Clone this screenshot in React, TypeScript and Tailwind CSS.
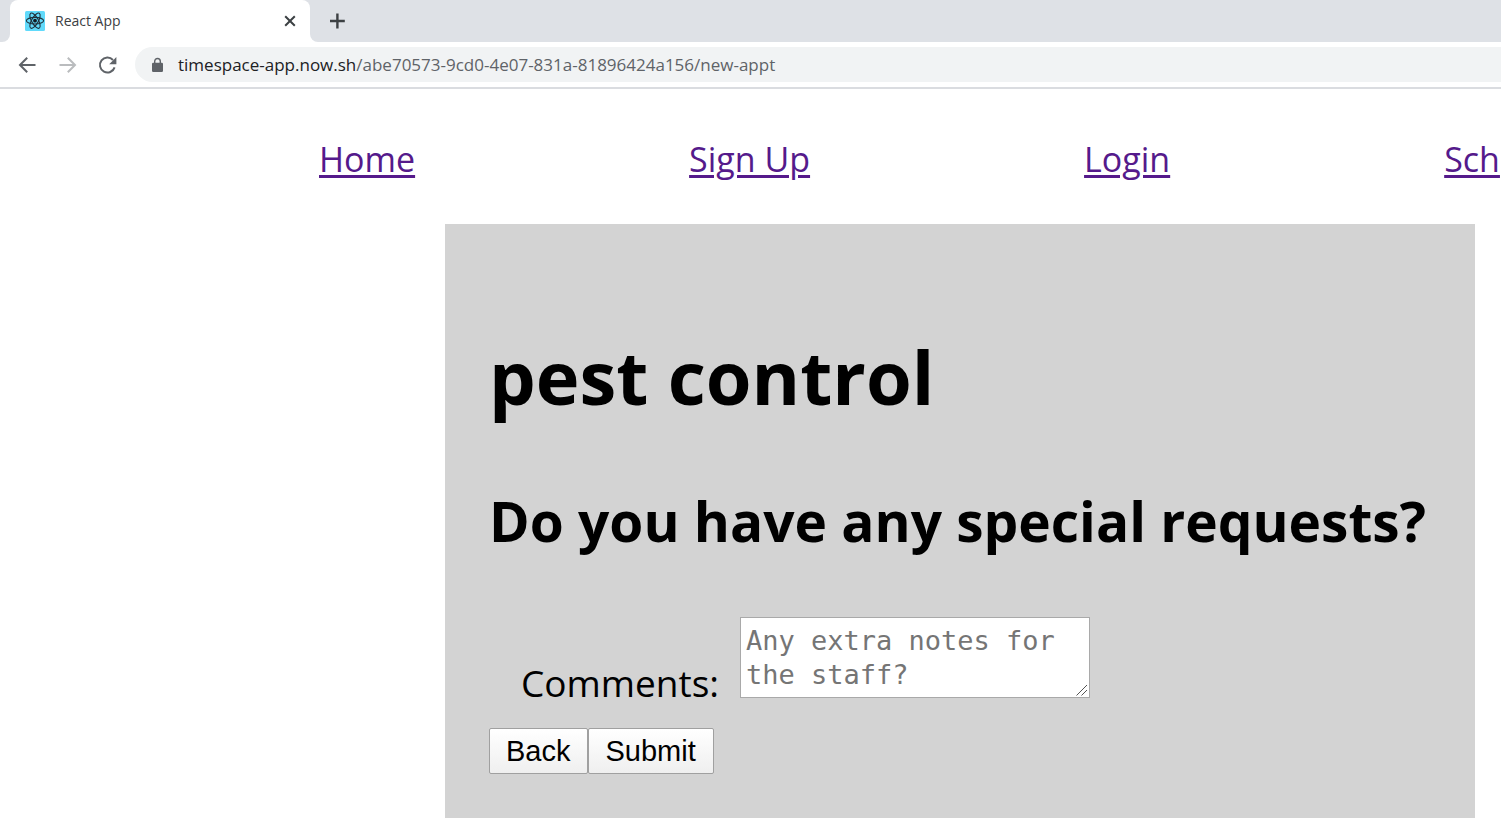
import React from "react";

const UI_FONT = "font-['Open_Sans','Noto_Sans',sans-serif]";

function ReactIcon() {
  return (
    <svg viewBox="0 0 20 20" className="size-5 shrink-0" aria-hidden="true">
      <rect width="20" height="20" rx="1.5" fill="#61dafb" />
      <g fill="none" stroke="#20303a" strokeWidth="1.1">
        <ellipse cx="10" cy="9.7" rx="8.6" ry="3.3" />
        <ellipse cx="10" cy="9.7" rx="8.6" ry="3.3" transform="rotate(60 10 9.7)" />
        <ellipse cx="10" cy="9.7" rx="8.6" ry="3.3" transform="rotate(120 10 9.7)" />
      </g>
      <circle cx="10" cy="9.7" r="1.9" fill="#101820" />
    </svg>
  );
}

function TabStrip() {
  return (
    <div className="flex h-[42px] bg-[#dee1e6]">
      <div className="w-[10px] bg-white">
        <div className="h-full rounded-br-lg bg-[#dee1e6]" />
      </div>
      <div className="flex w-[300px] items-center rounded-t-lg bg-white pl-[15px] pr-[13px]">
        <ReactIcon />
        <span className="ml-[10px] flex-1 text-[14px] leading-5 text-[#3c4043]">React App</span>
        <button type="button" aria-label="Close tab" className="flex size-[14px] items-center justify-center">
          <svg viewBox="0 0 14 14" className="size-[14px]" fill="none" stroke="#3c4043" strokeWidth="2">
            <path d="M2.2 2.2 11.8 11.8M11.8 2.2 2.2 11.8" />
          </svg>
        </button>
      </div>
      <div className="flex flex-1 bg-white">
        <div className="flex flex-1 items-center rounded-bl-lg bg-[#dee1e6] pl-[19px]">
          <button type="button" aria-label="New tab" className="size-4">
            <svg viewBox="0 0 16 16" className="size-4" fill="none" stroke="#3c4043" strokeWidth="2.4">
              <path d="M8.4 .6V15.4M1 8H15.8" />
            </svg>
          </button>
        </div>
      </div>
    </div>
  );
}

function Toolbar() {
  return (
    <div className="flex h-[47px] items-center border-b-2 border-[#dadce0] pl-[17px]">
      <button type="button" aria-label="Back" className="size-5">
        <svg viewBox="0 0 20 20" className="size-5" fill="none" stroke="#5f6368" strokeWidth="2">
          <path d="M18.5 10H3.4M10.2 2.8 3 10l7.2 7.2" />
        </svg>
      </button>
      <button type="button" aria-label="Forward" className="ml-5 size-5">
        <svg viewBox="0 0 20 20" className="size-5" fill="none" stroke="#babcbe" strokeWidth="2">
          <path d="M2.5 10H17.6M10.8 2.8 18 10l-7.2 7.2" />
        </svg>
      </button>
      <button type="button" aria-label="Reload" className="ml-5 size-5">
        <svg viewBox="0 0 20 20" className="size-5" fill="none" stroke="#5f6368" strokeWidth="2">
          <path d="M17.6 12.4A7.5 7.5 0 1 1 16 5" />
          <path d="M19.4 2v7.2h-7.2z" fill="#5f6368" stroke="none" />
        </svg>
      </button>
      <div className="ml-[18px] flex h-[35px] flex-1 items-center rounded-l-full bg-[#f1f3f4] pl-4">
        <svg viewBox="0 0 12 16" className="h-4 w-3 shrink-0" aria-hidden="true">
          <rect x="1" y="5.8" width="11" height="9.2" rx="1.2" fill="#5f6368" />
          <path d="M3.7 6V4.3a2.8 2.8 0 0 1 5.6 0V6" fill="none" stroke="#5f6368" strokeWidth="1.4" />
        </svg>
        <span className="ml-[15px] whitespace-nowrap text-[17px] leading-6 text-[#5f6368]">
          <span className="text-[#202124]">timespace-app.now.sh</span>
          /abe70573-9cd0-4e07-831a-81896424a156/new-appt
        </span>
      </div>
    </div>
  );
}

function Navigation() {
  return (
    <nav className="flex gap-[274px] overflow-hidden whitespace-nowrap pt-[46px] pl-[319px] text-[34px] leading-[48px] text-[#551a8b]">
      {["Home", "Sign Up", "Login", "Sch"].map((name) => (
        <a key={name} href="#" className="underline decoration-[3px] underline-offset-[3px]">
          {name}
        </a>
      ))}
    </nav>
  );
}

function AppointmentForm() {
  return (
    <form className="mt-[41px] mr-[26px] mb-[14px] ml-[445px] bg-[#d3d3d3] px-[44px] pt-[101px] pb-[44px] text-black">
      <h1 className="whitespace-nowrap text-[74px] leading-[104px] font-bold">pest control</h1>
      <h2 className="mt-[52px] whitespace-nowrap text-[55px] leading-[80px] font-bold">
        Do you have any special requests?
      </h2>
      <div className="mt-[56px] flex items-end pl-8">
        <label htmlFor="comments" className="w-[219px] whitespace-nowrap text-[37px] leading-[30px]">
          Comments:
        </label>
        <div className="relative">
          <textarea
            id="comments"
            rows={2}
            placeholder="Any extra notes for the staff?"
            className="block h-[81px] w-[350px] resize-none border border-[#a9a9a9] bg-white px-[5px] pt-[6px] font-['DejaVu_Sans_Mono',monospace] text-[27px] leading-[34px] placeholder:text-[#757575]"
          />
          <svg
            viewBox="0 0 12 12"
            className="pointer-events-none absolute right-[2px] bottom-[2px] size-3"
            fill="none"
            stroke="#555"
            aria-hidden="true"
          >
            <path d="M.5 11.5 11 1M5.5 11.5 11 6" />
          </svg>
        </div>
      </div>
      <div className="mt-[30px] flex font-['Liberation_Sans',Arial,sans-serif] text-[29px] leading-8">
        <button type="button" className="h-[46px] rounded-[2px] border border-[#a0a0a0] bg-linear-to-b from-white to-[#efefef] pr-[17px] pl-4">
          Back
        </button>
        <button type="submit" className="h-[46px] rounded-[2px] border border-[#a0a0a0] bg-linear-to-b from-white to-[#efefef] pr-[17px] pl-4">
          Submit
        </button>
      </div>
    </form>
  );
}

export default function App() {
  return (
    <div className={`flex min-h-screen flex-col overflow-x-hidden bg-white ${UI_FONT}`}>
      <header>
        <TabStrip />
        <Toolbar />
      </header>
      <Navigation />
      <main>
        <AppointmentForm />
      </main>
    </div>
  );
}
